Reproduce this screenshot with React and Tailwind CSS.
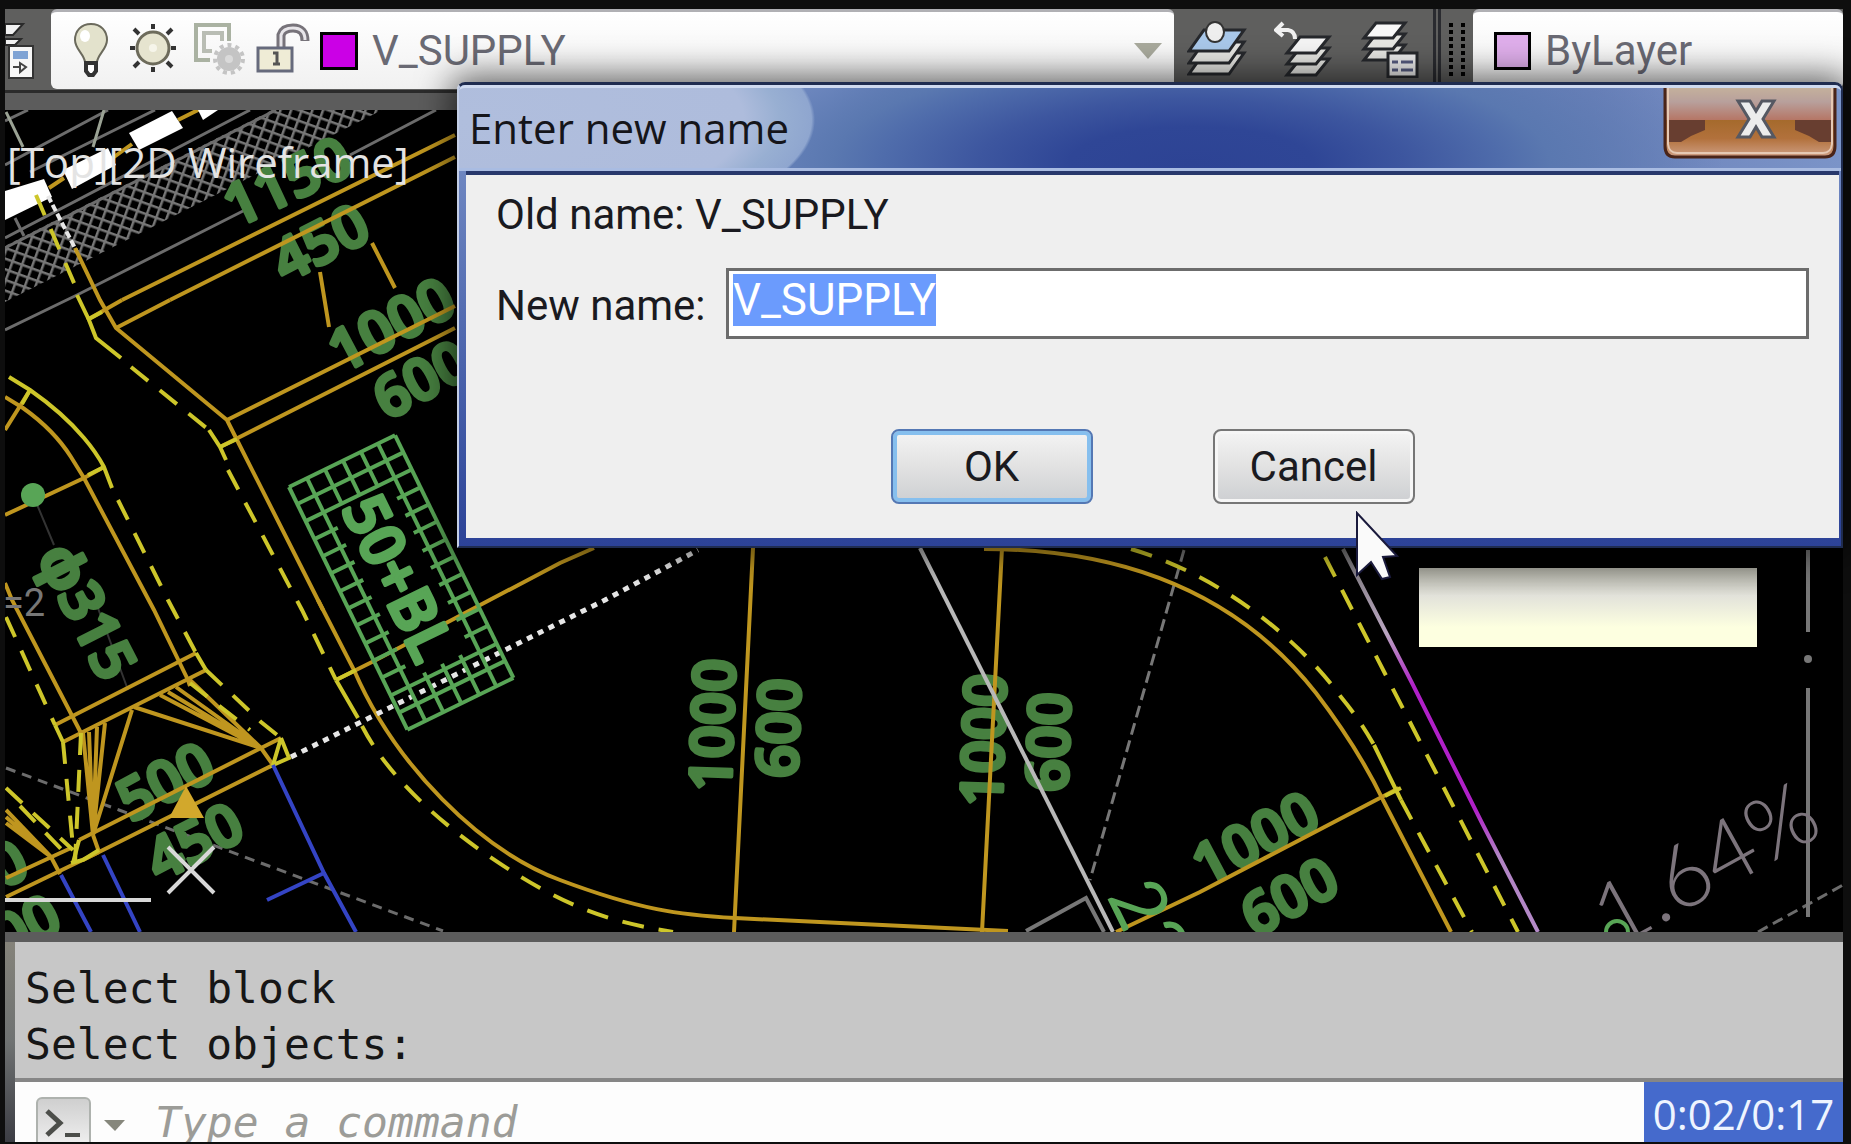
import { useEffect, useRef, useState } from "react";

const AMBER = "#bf961f";
const YELLOW = "#cdc62a";
const GREEN = "#478040";
const LIME = "#58a556";
const GREY = "#6c6c6c";

// dimension labels: [text, x, y, angle]
const labels = [
  ["1150", 287, 181, -25],
  ["450", 320, 242, -27],
  ["1000", 391, 324, -28],
  ["600", 421, 379, -28],
  ["ϕ315", 88, 611, 63],
  ["500", 165, 781, -28],
  ["450", 194, 841, -27],
  ["0", 8, 863, -27],
  ["00", 26, 925, -27],
  ["1000", 712, 725, -88],
  ["600", 778, 728, -88],
  ["1000", 983, 740, -88],
  ["600", 1048, 742, -88],
  ["1000", 1255, 838, -28],
  ["600", 1289, 896, -28],
];

const amberLines = [
  "M122 300L455 135M170 300L455 157",
  "M75 248L100 300L116 328L227 420L237 440L323 610",
  "M87 320L122 300M116 328L170 300",
  "M320 272L329 327M372 243L395 288",
  "M227 420L455 306M220 447L455 328",
  "M5 397L23 408Q54 430 71 457L84 478L154 610L188 680",
  "M30 390L5 430M5 515L84 478L104 467",
  "M5 583L12 600L81 733",
  "M55 725L196 653M63 742L206 670",
  "M79 840L261 748L281 738M83 860L273 765",
  "M6 878L71 848M6 897L99 852M93 835L99 852M261 748L273 765M188 680L190 686",
  "M93 835L83 733M93 835L89 732M93 835L97 727M93 835L105 723M93 835L132 710",
  "M261 748L134 707M261 748L160 695M261 748L168 692M261 748L176 687M261 748L190 680",
  "M51 857L6 823M51 857L6 817M51 857L6 810M51 857L60 874",
  "M318 600L354 670C395 765 480 850 560 880S680 915 735 918L1008 931",
  "M336 680L376 660L560 563L594 548",
  "M753 548L734 932M1002 548L982 932",
  "M984 549C1120 549 1235 590 1316 693Q1358 748 1383 800L1451 932",
  "M1116 932L1200 892L1399 788",
];

const whiteDashes = [
  "5,191 44,179 52,197 5,220",
  "63,170 108,148 116,165 72,189",
  "129,133 172,111 183,128 139,150",
  "198,110 218,110 203,120",
];

function Drawing() {
  return (
    <svg
      viewBox="5 110 1838 822"
      preserveAspectRatio="xMinYMin slice"
      className="block min-h-0 w-full flex-1 bg-black"
      fill="none"
      role="img"
      aria-label="Model space"
    >
      <defs>
        <pattern
          id="hatch"
          width="10"
          height="10"
          patternUnits="userSpaceOnUse"
          patternTransform="rotate(20)"
        >
          <path d="M0 0H10M0 0V10" stroke="#777" strokeWidth="5" />
        </pattern>
        <linearGradient id="supply" x1="0" y1="0" x2="0" y2="1">
          <stop offset="0" stopColor="#777" />
          <stop offset="0.22" stopColor="#b9a5c0" />
          <stop offset="0.36" stopColor="#b020c8" />
          <stop offset="0.68" stopColor="#b020c8" />
          <stop offset="0.8" stopColor="#b183c4" />
          <stop offset="1" stopColor="#b48ac8" />
        </linearGradient>
      </defs>

      {/* road surface */}
      <polygon points="5,246 272,110 382,110 5,302" fill="url(#hatch)" />
      <g stroke={GREY} strokeWidth="3">
        <path d="M5 248L276 110M5 238L250 110M5 330L77 295L245 210M350 155L436 110" />
        <path d="M5 165L108 110M30 172L155 110M5 121L28 110M15 218L24 236" />
        <path d="M6 112L23 147M104 110L93 147" stroke="#9aa294" />
      </g>
      <path d="M49 188L64 178M114 157L132 144M178 120L202 108" stroke={AMBER} strokeWidth="4" />
      {whiteDashes.map((points) => (
        <polygon key={points} points={points} fill="#fff" />
      ))}
      <path d="M48 196L77 252" stroke="#e8e8e8" strokeWidth="4" strokeDasharray="7 3" />

      {/* hidden and construction lines */}
      <path d="M6 768L119 810L443 931" stroke={GREY} strokeWidth="3" strokeDasharray="10 7" />
      <path d="M1184 550L1090 880" stroke="#777" strokeWidth="3" strokeDasharray="12 6" />
      <path d="M1758 932L1843 885" stroke={GREY} strokeWidth="3" strokeDasharray="11 6" />
      <path d="M33 495L54 545M95 600L128 690" stroke="#333" strokeWidth="2" />

      {/* green labels */}
      <g
        fill={GREEN}
        stroke={GREEN}
        strokeWidth="4"
        strokeLinejoin="round"
        textAnchor="middle"
        fontFamily="'Open Sans', sans-serif"
        fontWeight="600"
        fontSize="58"
      >
        {labels.map(([text, x, y, angle]) => (
          <text key={`${x}-${y}`} transform={`translate(${x} ${y}) rotate(${angle})`} y="21">
            {text}
          </text>
        ))}
      </g>

      {/* kerbs */}
      <g stroke={AMBER} strokeWidth="4">
        {amberLines.map((d) => (
          <path key={d} d={d} />
        ))}
      </g>
      <path d="M186 786L169 818H204Z" fill="#d2a82c" />

      {/* yellow outlines */}
      <g stroke={YELLOW} strokeWidth="4">
        <path d="M87 320L102 312M77 295L89 320L96 338L121 358" />
        <path d="M209 430L220 447L226 460M220 447L237 439" />
        <path d="M9 377L30 390Q63 413 84 438Q96 452 104 467L112 488" />
        <path d="M104 467L88 475M30 390L22 404" />
        <path d="M55 725L63 742M196 653L206 670M336 680L356 670M336 680L358 718" />
        <path d="M281 738L289 758L273 765L281 738M71 863L83 860L99 850M79 840L73 863" />
        <path d="M1374 745L1401 800M1401 788L1385 796" />
        <g strokeDasharray="22 15">
          <path d="M131 367L209 430M228 470L302 610L336 680M36 195L77 290" />
          <path d="M118 500L168 600L196 653M6 617L55 725" />
          <path d="M206 670L261 722L281 738M190 683L250 730" />
          <path d="M63 742L73 847M81 733L75 863M6 788L73 850M20 806L62 850" />
          <path d="M362 726C400 800 490 860 540 888S630 925 673 932" />
          <path d="M1131 549C1220 575 1300 640 1341 697Q1360 720 1374 745M1401 800L1472 932" />
          <path d="M1325 557L1518 932" />
        </g>
      </g>

      {/* buried services */}
      <g stroke="#3444c4" strokeWidth="4">
        <path d="M61 875L91 932M103 855L140 932M273 765L324 873L356 932M267 900L324 873" />
      </g>
      <path d="M291 757L605 600L698 550" stroke="#e6e6e6" strokeWidth="5" strokeDasharray="6 6" />
      <path d="M5 900H151M168 847L214 893M214 847L168 893" stroke="#d8d8d8" strokeWidth="4" />
      <path d="M920 548L1113 932" stroke="#b8b8b8" strokeWidth="4" />
      <path d="M1026 931L1086 898L1104 932M1808 550V632M1808 688V917" stroke="#777" strokeWidth="4" />
      <circle cx="1808" cy="659" r="4" fill="#777" />
      <path d="M1343 549L1412 683L1482 823L1538 932" stroke="url(#supply)" strokeWidth="4" />
      <circle cx="33" cy="495" r="12" fill={LIME} />
      <circle cx="1617" cy="932" r="11" stroke={LIME} strokeWidth="4" />

      {/* 50+BL block */}
      <g transform="translate(289 487) rotate(-26)">
        <g stroke={LIME} strokeWidth="4">
          {[0, 20, 99, 118].map((x) => (
            <path key={x} d={`M${x} 0V270`} />
          ))}
          {[40, 60, 80].map((x) => (
            <path key={x} d={`M${x} 0V38M${x} 226V270`} />
          ))}
          {[0, 19, 38, 232, 251, 270].map((y) => (
            <path key={y} d={`M0 ${y}H118`} />
          ))}
          {[58, 77, 96, 116, 135, 154, 174, 193, 212].map((y) => (
            <path key={y} d={`M0 ${y}H26M92 ${y}H118`} />
          ))}
        </g>
        <text
          transform="rotate(90)"
          x="42"
          y="-37"
          fill={LIME}
          stroke={LIME}
          strokeWidth="4"
          strokeLinejoin="round"
          fontFamily="'Open Sans', sans-serif"
          fontWeight="600"
          fontSize="60"
        >
          50+BL
        </text>
      </g>

      {/* annotations */}
      <text x="3" y="616" fill="#777" fontFamily="Roboto, sans-serif" fontSize="38">
        =2
      </text>
      <text
        transform="translate(1106 896) rotate(64)"
        fill={LIME}
        fontFamily="Lato, sans-serif"
        fontWeight="400"
        fontSize="76"
      >
        23
      </text>
      <text
        transform="translate(1614 950) rotate(-29)"
        fill="#7c747c"
        fontFamily="Lato, sans-serif"
        fontWeight="300"
        fontSize="88"
      >
        1.64%
      </text>
      <text
        x="7"
        y="178"
        fill="#e4e4e4"
        fontFamily="'Open Sans', sans-serif"
        fontSize="42"
      >
        [Top][2D Wireframe]
      </text>
    </svg>
  );
}

function StateIcons() {
  return (
    <svg viewBox="0 0 244 60" className="h-[60px] w-[244px] shrink-0" fill="none">
      {/* bulb */}
      <path
        d="M21 3C11 3 5 10 5 19C5 28 14 33 15 41H27C28 33 37 28 37 19C37 10 31 3 21 3Z"
        fill="#e3e2cc"
        stroke="#6b6a5c"
        strokeWidth="2"
      />
      <ellipse cx="15" cy="15" rx="5" ry="6" fill="#fff" />
      <path d="M16 42H26V50L23 54H19L16 50Z" fill="#fff" stroke="#333" strokeWidth="4" />
      {/* sun */}
      <circle cx="83" cy="27" r="16" fill="#e6e4cf" stroke="#6d6b5b" strokeWidth="3" />
      <circle cx="83" cy="27" r="4" fill="#f6f5ea" />
      <path
        d="M83 3V8M83 46V51M60 27H65M101 27H106M64 8L69 13M97 41L102 46M64 46L69 41M97 13L102 8"
        stroke="#333"
        strokeWidth="4"
      />
      {/* viewport freeze */}
      <path d="M140 39H126V4H159V20" stroke="#aab2a2" strokeWidth="4" />
      <path d="M142 30H134V12H152V20" stroke="#b9bdb4" strokeWidth="4" />
      <circle cx="159" cy="38" r="12" fill="#c4c4c4" />
      <circle cx="159" cy="38" r="14" stroke="#c4c4c4" strokeWidth="4" strokeDasharray="4 4" />
      <circle cx="159" cy="38" r="4" fill="#dadada" />
      {/* open lock */}
      <path d="M211 26V14Q213 7 223 7Q235 7 235 20" stroke="#77737a" strokeWidth="9" />
      <path d="M211 27V14Q213 7 223 7Q235 7 235 19" stroke="#e8e6ea" strokeWidth="3" />
      <rect x="188" y="27" width="34" height="23" fill="#efecd6" stroke="#666a7c" strokeWidth="3" />
      <path d="M203 32H207V43M203 43H210" stroke="#555" strokeWidth="3" />
    </svg>
  );
}

function Sheets({ points, steps, top }) {
  return [...steps].reverse().map((dy) => (
    <g key={dy} transform={`translate(0 ${dy})`}>
      <polygon
        points={points}
        fill={dy === 0 ? top : "#e6e6e2"}
        stroke="#26282c"
        strokeWidth="3"
      />
    </g>
  ));
}

function LayerTools() {
  const button = "flex h-[60px] w-[62px] items-center justify-center";
  return (
    <div className="flex flex-1 items-center justify-between pr-3 pl-3">
      <button className={button} aria-label="Make object's layer current">
        <svg viewBox="0 0 60 58" className="h-[58px] w-[60px]">
          <Sheets points="17,10 57,10 42,31 2,31" steps={[0, 12, 23]} top="#a9c8ea" />
          <ellipse cx="28" cy="12" rx="9" ry="10" fill="#eee" stroke="#333" strokeWidth="2" />
        </svg>
      </button>
      <button className={button} aria-label="Layer previous">
        <svg viewBox="0 0 60 58" className="h-[58px] w-[60px]" fill="none">
          <Sheets points="26,17 55,17 42,33 13,33" steps={[0, 11, 22]} top="#f4f4f4" />
          <path d="M3 10H14Q21 11 21 19M9 3L2 10L9 16" stroke="#f0f0f0" strokeWidth="4" />
        </svg>
      </button>
      <button className={button} aria-label="Layer states manager">
        <svg viewBox="0 0 60 58" className="h-[58px] w-[60px]">
          <Sheets points="16,3 45,3 33,18 4,18" steps={[0, 11, 22]} top="#f8f8f8" />
          <rect x="28" y="33" width="29" height="24" fill="#ededed" stroke="#26282c" strokeWidth="3" />
          <path d="M32 42H38M41 42H53M32 50H38M41 50H53" stroke="#565c80" strokeWidth="3" />
        </svg>
      </button>
    </div>
  );
}

function Toolbar() {
  const combo =
    "flex h-[80px] items-center rounded-md border-t-3 border-[#b0b0b4] bg-linear-to-b from-white to-[#f1f1f1]";
  const select =
    "h-[60px] min-w-0 flex-1 appearance-none bg-transparent font-['Roboto'] text-[42px] leading-[60px] text-[#6a6a74] outline-none";
  return (
    <header className="flex h-[84px] shrink-0 items-start border-b-3 border-[#2b2b2b] bg-[#5f5f5e]">
      <svg viewBox="0 0 46 80" className="h-[80px] w-[46px] shrink-0" fill="none">
        <path d="M0 15H18L8 26H0ZM0 30H16L10 36H0Z" fill="#f2f2f2" stroke="#2a2a2a" strokeWidth="2" />
        <rect x="4" y="37" width="24" height="32" fill="#f6f6f6" stroke="#333" strokeWidth="2" />
        <path d="M8 42H23V50H8Z" fill="#7fa3d4" />
        <path d="M8 58H15V54L21 58L15 63V58" stroke="#444" strokeWidth="2" />
      </svg>
      <div className={`${combo} flex-1 pr-3 pl-[19px]`}>
        <StateIcons />
        <span className="ml-[6px] h-[38px] w-[38px] shrink-0 border-3 border-black bg-[#cb00e6]" />
        <select aria-label="Layer" className={`${select} pl-[14px]`}>
          <option>V_SUPPLY</option>
        </select>
        <svg viewBox="0 0 28 16" className="h-4 w-7 shrink-0">
          <path d="M0 0H28L14 16Z" fill="#a9aa9d" />
        </svg>
      </div>
      <div className="flex h-[80px] w-[299px] shrink-0 items-center">
        <LayerTools />
        <span className="h-full w-2 border-x-3 border-[#2a2b30]" />
        <span className="mr-2 ml-2 grid grid-cols-2 gap-x-2 gap-y-[3px]">
          {Array.from({ length: 16 }, (_, i) => (
            <span key={i} className="h-1 w-1 bg-black" />
          ))}
        </span>
      </div>
      <div className={`${combo} w-[370px] shrink-0 pl-[21px]`}>
        <span className="h-[38px] w-[37px] shrink-0 border-3 border-black bg-[#dfaeeb]" />
        <select aria-label="Colour" className={`${select} pl-[14px]`}>
          <option>ByLayer</option>
        </select>
      </div>
    </header>
  );
}

function RenameDialog() {
  const [name, setName] = useState("V_SUPPLY");
  const inputRef = useRef(null);

  useEffect(() => {
    inputRef.current.focus();
    inputRef.current.select();
  }, []);

  const button =
    "h-[75px] w-[202px] rounded-lg border-2 bg-linear-to-b from-[#f4f4f4] from-0% via-[#e2e2e2] via-50% to-[#cdcfd2]";

  return (
    <div
      role="dialog"
      aria-label="Enter new name"
      className="absolute top-[82px] right-2 left-[457px] rounded-t-lg border-2 border-t-3 border-[#1f2c50] border-l-[#c3cee6] bg-linear-to-b from-[#7f96ca] to-[#2c4297] shadow-[0_0_34px_6px_rgba(0,0,0,0.6)]"
    >
      <div className="flex h-[86px] items-start justify-between rounded-t-md border-y-3 border-t-[#cfdaf0] border-b-[#a9bce2] bg-[radial-gradient(ellipse_356px_130px_at_0_40%,#b0bedd_0%,#aebcdc_80%,#98afd2_90%,#8fa6cf_99%,transparent_100%),radial-gradient(ellipse_560px_170px_at_53%_95%,#2d4394_0%,#2f4696_22%,#3d569f_38%,#4f6cab_55%,#5a78b0_64%,transparent_95%),linear-gradient(90deg,#7a91c8_0%,#7a91c8_27%,#6a80b8_36%,#6a80b8_74%,#6c82ba_82%,#7b94c8_100%)]">
        <h1 className="pl-[10px] font-['Open_Sans'] text-[42px] leading-[80px] text-[#15151a]">
          Enter new name
        </h1>
        <button aria-label="Close" className="mr-1 h-[72px] w-[174px]">
          <svg viewBox="0 0 174 72" className="h-full w-full">
            <defs>
              <linearGradient id="closeTop" x1="0" y1="0" x2="0" y2="1">
                <stop offset="0" stopColor="#c4b09c" />
                <stop offset="0.2" stopColor="#b8a09c" />
                <stop offset="0.5" stopColor="#b5705e" />
              </linearGradient>
              <linearGradient id="closeBottom" x1="0" y1="0" x2="0" y2="1">
                <stop offset="0" stopColor="#a56a2c" />
                <stop offset="0.5" stopColor="#b2713c" />
                <stop offset="1" stopColor="#cf9f84" />
              </linearGradient>
            </defs>
            <path d="M2 0V58Q2 69 12 69H162Q172 69 172 58V0Z" fill="url(#closeTop)" />
            <path d="M2 32V58Q2 69 12 69H162Q172 69 172 58V32Z" fill="url(#closeBottom)" />
            <path d="M5 32H42V42L28 48L18 54H5ZM169 32H132V42L146 48L156 54H169Z" fill="#683e30" />
            <path d="M5 0V56Q6 65 14 65H160Q168 65 169 56V0" fill="none" stroke="#e6c9b4" strokeWidth="2" />
            <path d="M2 0V58Q2 69 12 69H162Q172 69 172 58V0" fill="none" stroke="#4a2418" strokeWidth="3" />
            <path
              d="M75 13H87L93 23L99 13H111L100 31L111 49H99L93 39L87 49H75L86 31Z"
              fill="#ececec"
              stroke="#555862"
              strokeWidth="3"
            />
          </svg>
        </button>
      </div>
      <form
        onSubmit={(e) => e.preventDefault()}
        className="mr-[2px] mb-[8px] ml-[7px] border-t-4 border-[#28386c] bg-[#efefef] px-[30px] pt-[15px] pb-[34px] font-['Roboto'] text-[42px] leading-[50px] text-[#1a1a20]"
      >
        <p>Old name: V_SUPPLY</p>
        <div className="mt-[28px] flex items-center justify-between">
          <label htmlFor="new-name" className="w-[230px] shrink-0 pt-1">
            New name:
          </label>
          <input
            id="new-name"
            ref={inputRef}
            type="text"
            value={name}
            onChange={(e) => setName(e.target.value)}
            className="h-[71px] min-w-0 flex-1 border-3 border-[#6c6c6c] bg-white px-1 pb-2 text-[44px] outline-none selection:bg-[#6b9bfd] selection:text-white"
          />
        </div>
        <div className="mt-[90px] flex justify-center gap-[120px]">
          <button type="submit" className={`${button} border-[#5478b4] inset-ring-4 inset-ring-[#86bfee]`}>
            OK
          </button>
          <button type="button" className={`${button} border-[#767676] inset-ring-3 inset-ring-[#f6f6f6]`}>
            Cancel
          </button>
        </div>
      </form>
    </div>
  );
}

function CommandLine() {
  return (
    <footer className="flex h-[210px] shrink-0 border-t-10 border-[#5c5c5c] font-['DejaVu_Sans_Mono'] text-[43px]">
      <div className="w-[10px] shrink-0 bg-linear-to-b from-[#85837a] via-[#6f7272] to-[#3c3d44]" />
      <div className="flex min-w-0 flex-1 flex-col">
        <div className="h-[140px] shrink-0 border-b-4 border-[#868686] bg-[#c7c7c7] pt-[18px] pl-[10px] leading-[56px] text-[#161616]">
          <p>Select block</p>
          <p>Select objects:</p>
        </div>
        <div className="flex min-h-0 flex-1 overflow-hidden bg-[#fdfdfd]">
          <button
            aria-label="Recent commands"
            className="mt-[15px] ml-[21px] h-[56px] w-[55px] shrink-0 rounded-md border-2 border-[#aeb2ae] bg-linear-to-b from-[#cfcfcf] to-[#f4f4f4]"
          >
            <svg viewBox="0 0 51 52" className="h-[52px] w-[51px]" fill="none">
              <path d="M9 12L22 24L9 36" stroke="#4c4e4a" strokeWidth="5" />
              <path d="M27 36H42" stroke="#4c4e4a" strokeWidth="4" />
            </svg>
          </button>
          <svg viewBox="0 0 21 11" className="mt-[38px] ml-[13px] h-[11px] w-[21px] shrink-0">
            <path d="M0 0H21L11 11Z" fill="#86877c" />
          </svg>
          <input
            type="text"
            aria-label="Command"
            placeholder="Type a command"
            className="mt-[12px] h-[56px] min-w-0 flex-1 bg-transparent pl-[30px] italic outline-none placeholder:text-[#9c9c98]"
          />
          <time className="w-[199px] shrink-0 bg-[#456acc] text-center font-['Open_Sans'] text-[42px] leading-[64px] text-[#eef4ff]">
            0:02/0:17
          </time>
        </div>
      </div>
    </footer>
  );
}

export default function App() {
  return (
    <div className="relative flex h-screen flex-col overflow-hidden bg-[#0e0e0e] pt-[9px] pr-2 pb-[2px] pl-[5px]">
      <Toolbar />
      <div className="h-[17px] shrink-0 bg-[#5c5c5c]" />
      <Drawing />
      <CommandLine />

      {/* empty tooltip */}
      <div className="absolute top-[568px] right-[94px] h-[79px] w-[338px] bg-linear-to-b from-[#a5a59b] via-[#e2e2da] via-35% to-[#fdffe0] to-75%" />
      <RenameDialog />
      <svg viewBox="0 0 44 70" className="absolute top-[511px] right-[451px] h-[70px] w-[44px]">
        <path
          d="M1 2V64L15 51L26 68L34 66L27 46L41 45Z"
          fill="#fafafa"
          stroke="#1a1a3c"
          strokeWidth="2"
        />
      </svg>
    </div>
  );
}
